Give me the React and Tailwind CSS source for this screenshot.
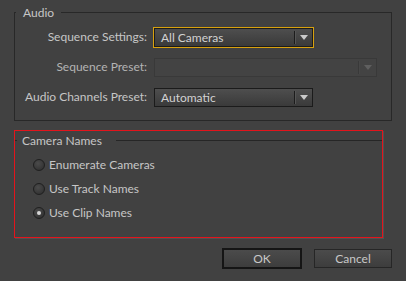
import clsx from 'clsx';

const FONT = { fontFamily: 'Lato, "Liberation Sans", sans-serif' };

function Arrow({ color }) {
  return (
    <svg width="8" height="5" viewBox="0 0 8 5">
      <path d="M0 0 H8 L4 5 Z" fill={color} />
    </svg>
  );
}

function Dropdown({ value, width, disabled, focused }) {
  return (
    <div
      className={clsx(
        'flex h-[19px] items-center border',
        width,
        focused && 'outline-1 outline-offset-0 outline-solid outline-[#d8a10e]',
        disabled
          ? 'border-[#393939] bg-[#434343]'
          : 'border-[#1b1b1b] bg-gradient-to-b from-[#4e4e4e] to-[#3a3a3a]'
      )}
    >
      <span className="flex-1 whitespace-nowrap pl-[6px] text-[12px] leading-[17px] text-[#d2d2d2]">{value}</span>
      <div className={clsx('h-[13px] w-px', disabled ? 'bg-[#393939]' : 'bg-[#1c1c1c]')} />
      <div className={clsx('h-[13px] w-px', disabled ? 'bg-[#474747]' : 'bg-[#555]')} />
      <div className="flex w-[16px] items-center justify-center">
        <Arrow color={disabled ? '#5f5f5f' : '#c9c9c9'} />
      </div>
    </div>
  );
}

function Row({ label, children, dim }) {
  return (
    <div className="flex h-[30px] items-center">
      <span className={clsx('w-[132px] text-right text-[12px]', dim ? 'text-[#b4b4b4]' : 'text-[#c6c6c6]')}>
        {label}
      </span>
      <div className="ml-[7px]">{children}</div>
    </div>
  );
}

function Radio({ label, checked }) {
  return (
    <div className="flex h-[24px] items-center gap-[4px]">
      <div className="flex h-[12px] w-[12px] items-center justify-center rounded-full border border-[#1f1f1f] bg-[radial-gradient(circle_at_40%_35%,#4b4b4b,#2c2c2c)]">
        {checked && <div className="h-[4px] w-[4px] rounded-full bg-[#d6d6d6]" />}
      </div>
      <span className="text-[12px] text-[#c6c6c6]">{label}</span>
    </div>
  );
}

export default function App() {
  return (
    <div style={FONT} className="flex h-[281px] w-[406px] flex-col bg-[#414141] px-[14px] pt-[4px]">
      {/* Audio */}
      <fieldset className="m-0 h-[117px] border border-[#282828] p-0 pb-[8px]">
        <legend className="ml-[1px] px-[7px] text-[12px] leading-[17px] text-[#c6c6c6]">Audio</legend>
        <div className="mt-[1px] flex flex-col">
          <Row label="Sequence Settings:">
            <Dropdown value="All Cameras" width="w-[159px]" focused />
          </Row>
          <Row label="Sequence Preset:" dim>
            <Dropdown value="" width="w-[223px]" disabled />
          </Row>
          <Row label="Audio Channels Preset:">
            <Dropdown value="Automatic" width="w-[159px]" />
          </Row>
        </div>
      </fieldset>

      {/* Camera Names (highlighted) */}
      <div className="mt-[9px] h-[108px] w-[369px] border border-[#e3141c] shadow-[1px_1px_0_#505050]">
        <fieldset className="m-0 mt-[1px] border-0 border-t border-[#262626] p-0">
          <legend className="ml-[2px] w-[99px] pl-[5px] text-[12px] leading-[17px] text-[#c6c6c6]">Camera Names</legend>
          <div className="mt-[4px] flex flex-col pl-[18px]">
            <Radio label="Enumerate Cameras" />
            <Radio label="Use Track Names" />
            <Radio label="Use Clip Names" checked />
          </div>
        </fieldset>
      </div>

      {/* Buttons */}
      <div className="mt-[10px] flex items-center justify-end gap-[12px]">
        <button className="flex h-[21px] w-[80px] items-center justify-center border-2 border-[#151515] bg-gradient-to-b from-[#4b4b4b] to-[#3d3d3d] text-[12px] text-[#c8c8c8]">
          OK
        </button>
        <button className="flex h-[19px] w-[78px] items-center justify-center border border-[#262626] bg-gradient-to-b from-[#4b4b4b] to-[#3d3d3d] text-[12px] text-[#c8c8c8]">
          Cancel
        </button>
      </div>
    </div>
  );
}
